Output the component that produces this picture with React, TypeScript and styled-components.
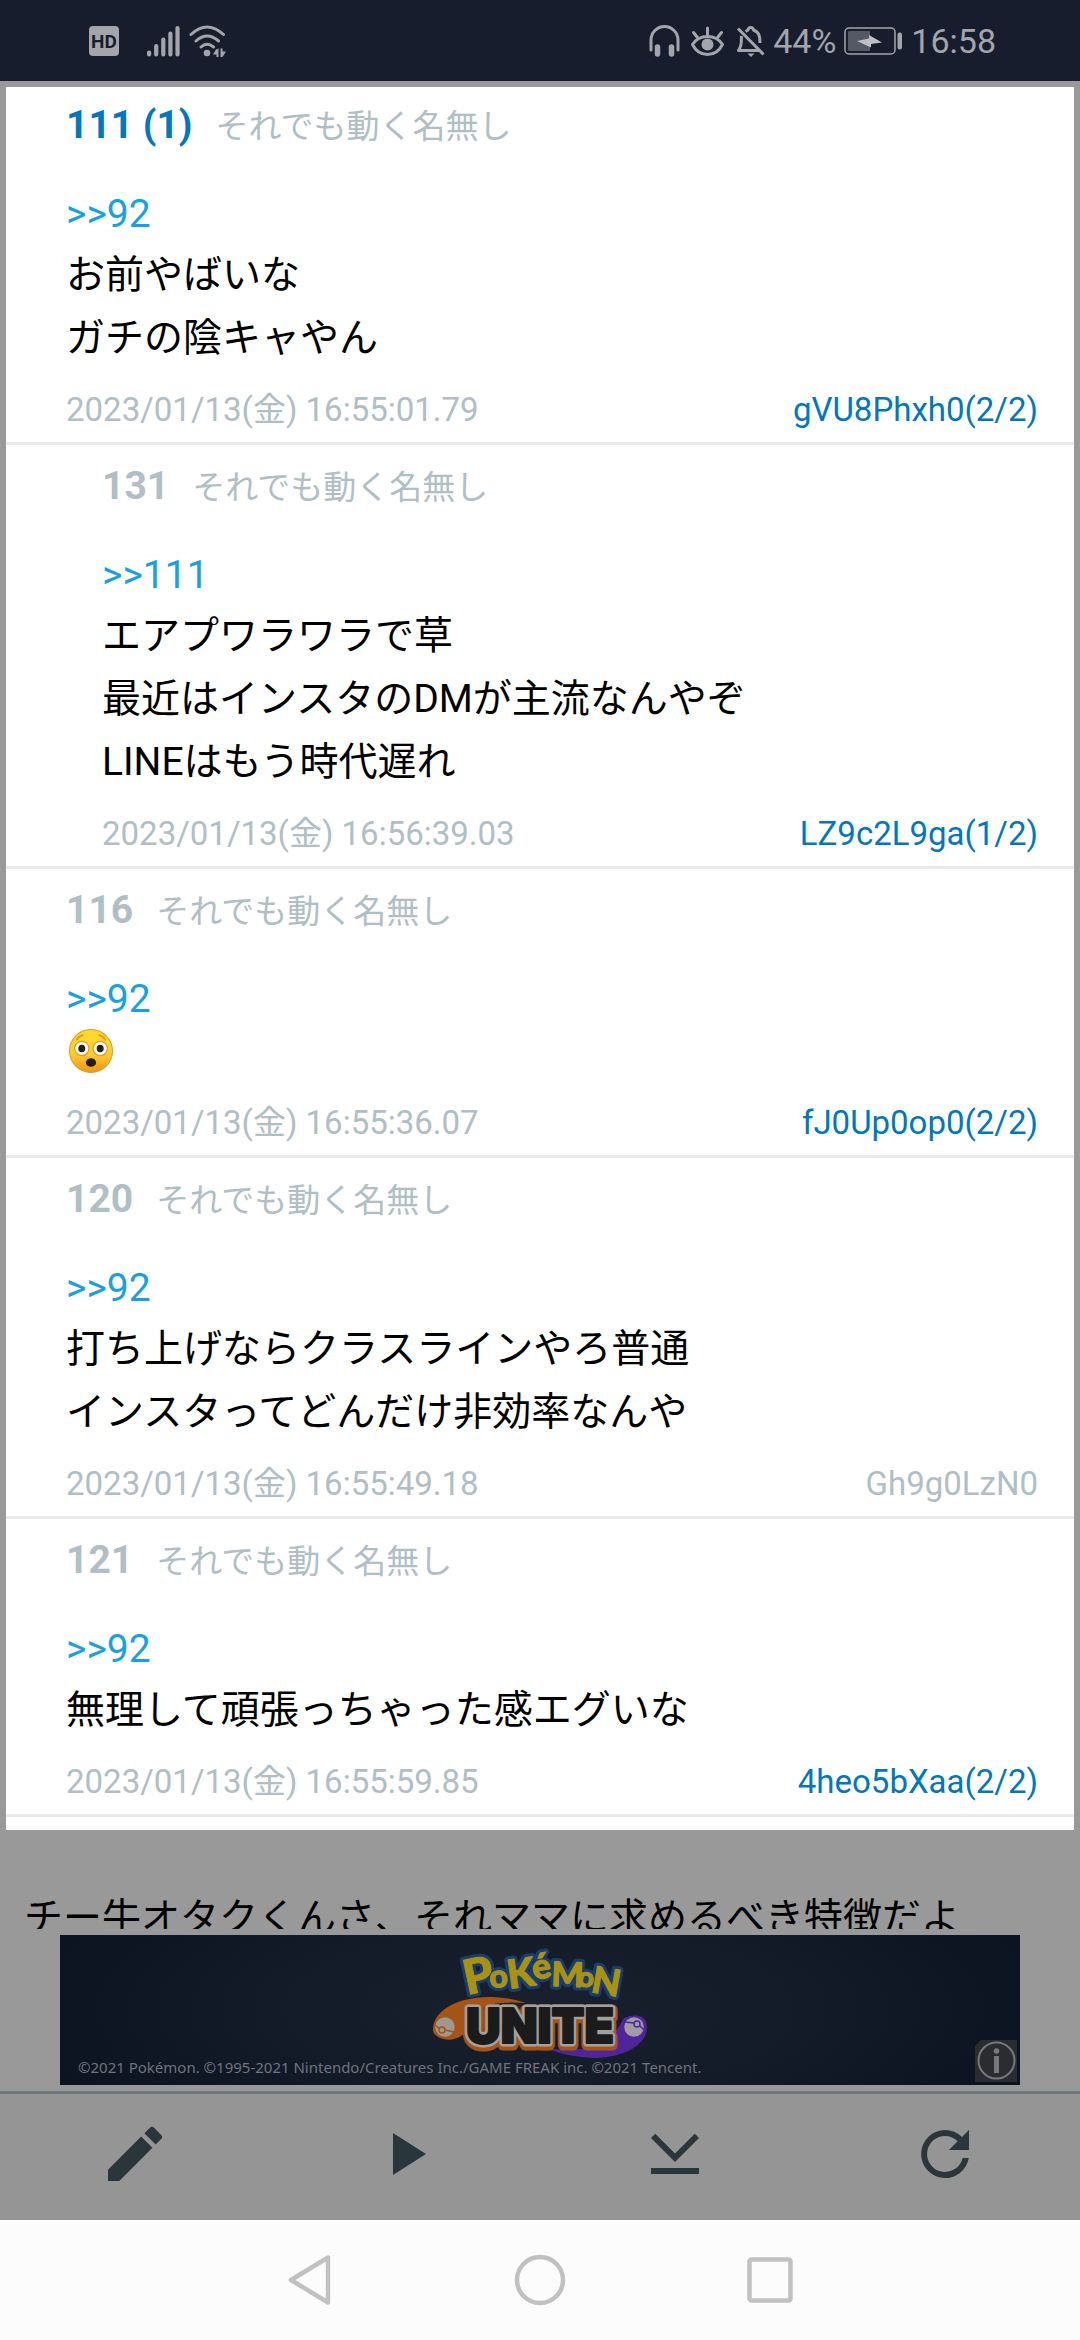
import React from "react";
import styled, { createGlobalStyle } from "styled-components";

const color = {
  status: "#171d2d",
  statusInk: "#a3a5ab",
  scrim: "#999999",
  card: "#ffffff",
  divider: "#eaebeb",
  muted: "#b0bec5",
  link: "#0277bd",
  anchor: "#18a0e3",
  text: "#000000",
  toolbar: "#959595",
  toolbarLine: "#6f7a7c",
  toolbarInk: "#29363c",
  nav: "#fcfcfc",
  navInk: "#c1c1c1",
};

const GlobalStyle = createGlobalStyle`
  *, *::before, *::after { box-sizing: border-box; }
  body {
    margin: 0;
    background: ${color.scrim};
    font-family: Roboto, "Noto Sans CJK JP", sans-serif;
    font-size: 39px;
    line-height: 63px;
    color: ${color.text};
  }
  p, h2, ul, ol { margin: 0; padding: 0; }
  svg { display: block; flex: none; }
`;

const Screen = styled.div`
  display: flex;
  flex-direction: column;
  min-height: 100vh;
`;

const StatusBar = styled.header`
  display: flex;
  justify-content: space-between;
  align-items: center;
  height: 81px;
  padding: 0 84px 0 89px;
  background: ${color.status};
  color: ${color.statusInk};
  font-size: 34px;
  line-height: 40px;
`;

const StatusGroup = styled.div`
  display: flex;
  align-items: center;
  gap: 8px;
`;

const SignalGroup = styled(StatusGroup)`
  margin-left: 20px;
`;

const Popup = styled.ol`
  margin: 6px 6px 0;
  padding-bottom: 13px;
  background: ${color.card};
  list-style: none;
`;

const PostItem = styled.li<{ $nested: boolean }>`
  padding: 18px 36px 13px ${(p) => (p.$nested ? 96 : 60)}px;
  border-bottom: 3px solid ${color.divider};

  &:first-child {
    padding-top: 15px;
  }
`;

const PostHeader = styled.div`
  display: flex;
  align-items: baseline;
  gap: 23px;
  height: 48px;
  margin-bottom: 34px;
  line-height: 46px;
  color: ${color.muted};
`;

const PostNumber = styled.h2<{ $replied: boolean }>`
  font-size: 39px;
  font-weight: 700;
  line-height: 46px;
  color: ${(p) => (p.$replied ? color.link : color.muted)};
`;

const PosterName = styled.span`
  font-size: 33px;
`;

const Anchor = styled.a`
  display: block;
  line-height: 60px;
  color: ${color.anchor};
  text-decoration: none;
`;

const EmojiLine = styled.div`
  display: flex;
  align-items: center;
  height: 54px;
  padding: 0 0 10px 3px;
`;

const PostFooter = styled.div`
  display: flex;
  justify-content: space-between;
  margin-top: 20px;
  font-size: 33px;
  line-height: 39px;
  color: ${color.muted};
`;

const PosterId = styled.a<{ $active: boolean }>`
  color: ${(p) => (p.$active ? color.link : color.muted)};
  text-decoration: none;
`;

const ThreadBehind = styled.main`
  flex: 1 0 99px;
  height: 99px;
  overflow: hidden;
  padding: 57px 24px 0;
  white-space: nowrap;
`;

const Banner = styled.aside`
  position: relative;
  display: flex;
  flex-direction: column;
  align-items: center;
  height: 150px;
  margin: 6px 60px;
  background: radial-gradient(ellipse 60% 130% at 50% 50%, #1a212e 0%, #131a28 45%, #0a1220 100%);
`;

const BannerCaption = styled.p`
  align-self: stretch;
  padding-left: 18px;
  font-family: "Noto Sans", sans-serif;
  font-size: 15px;
  line-height: 20px;
  color: #70747c;
  white-space: nowrap;
`;

const AdInfo = styled.button`
  position: absolute;
  right: 3px;
  bottom: 3px;
  padding: 0;
  border: 0;
  background: none;
`;

const Toolbar = styled.nav`
  display: grid;
  grid-template-columns: repeat(4, 1fr);
  height: 129px;
  padding-bottom: 6px;
  border-top: 3px solid ${color.toolbarLine};
  background: ${color.toolbar};
`;

const IconButton = styled.button`
  display: flex;
  align-items: center;
  justify-content: center;
  padding: 0;
  border: 0;
  background: none;
  color: inherit;
`;

const ToolButton = styled(IconButton)`
  color: ${color.toolbarInk};
`;

const SystemNav = styled.nav`
  display: flex;
  justify-content: center;
  height: 120px;
  background: ${color.nav};
  color: ${color.navInk};
`;

const NavButton = styled(IconButton)`
  width: 230px;
`;

type Post = {
  no: string;
  replied?: boolean;
  nested?: boolean;
  anchor: string;
  lines: string[];
  emoji?: boolean;
  date: string;
  id: string;
  active: boolean;
};

const posts: Post[] = [
  {
    no: "111 (1)",
    replied: true,
    anchor: ">>92",
    lines: ["お前やばいな", "ガチの陰キャやん"],
    date: "2023/01/13(金) 16:55:01.79",
    id: "gVU8Phxh0(2/2)",
    active: true,
  },
  {
    no: "131",
    nested: true,
    anchor: ">>111",
    lines: ["エアプワラワラで草", "最近はインスタのDMが主流なんやぞ", "LINEはもう時代遅れ"],
    date: "2023/01/13(金) 16:56:39.03",
    id: "LZ9c2L9ga(1/2)",
    active: true,
  },
  {
    no: "116",
    anchor: ">>92",
    lines: [],
    emoji: true,
    date: "2023/01/13(金) 16:55:36.07",
    id: "fJ0Up0op0(2/2)",
    active: true,
  },
  {
    no: "120",
    anchor: ">>92",
    lines: ["打ち上げならクラスラインやろ普通", "インスタってどんだけ非効率なんや"],
    date: "2023/01/13(金) 16:55:49.18",
    id: "Gh9g0LzN0",
    active: false,
  },
  {
    no: "121",
    anchor: ">>92",
    lines: ["無理して頑張っちゃった感エグいな"],
    date: "2023/01/13(金) 16:55:59.85",
    id: "4heo5bXaa(2/2)",
    active: true,
  },
];

function FlushedFace() {
  return (
    <svg width="44" height="44" viewBox="0 0 43 43" role="img" aria-label="😳">
      <defs>
        <linearGradient id="face" x1="0" y1="0" x2="0" y2="1">
          <stop offset="0" stopColor="#fddb2e" />
          <stop offset="0.55" stopColor="#fdd030" />
          <stop offset="1" stopColor="#f39219" />
        </linearGradient>
      </defs>
      <circle cx="21.5" cy="21.5" r="21" fill="url(#face)" stroke="#e59a1e" />
      <path d="M7.5 10.5Q9.5 7 13.5 6M35.5 10.5Q33.5 7 29.5 6" fill="none" stroke="#e39a1a" strokeWidth="1.6" strokeLinecap="round" />
      <circle cx="12.5" cy="19" r="7" fill="#fff" stroke="#e59a1e" strokeWidth="1.2" />
      <circle cx="30.5" cy="19" r="7" fill="#fff" stroke="#e59a1e" strokeWidth="1.2" />
      <ellipse cx="12.5" cy="19" rx="3.4" ry="3.7" fill="#222" />
      <ellipse cx="30.5" cy="19" rx="3.4" ry="3.7" fill="#222" />
      <ellipse cx="21.5" cy="32.8" rx="5" ry="4.2" fill="#251d14" />
    </svg>
  );
}

function HdIcon() {
  return (
    <svg width="30" height="30" viewBox="0 0 30 30" role="img" aria-label="HD">
      <rect width="30" height="30" rx="4" fill={color.statusInk} />
      <text x="15" y="22" textAnchor="middle" fontFamily="Roboto" fontSize="19" fontWeight="700" fill={color.status}>
        HD
      </text>
    </svg>
  );
}

function SignalIcon() {
  return (
    <svg width="34" height="32" viewBox="0 0 34 32" stroke="currentColor" strokeWidth="4.2" strokeLinecap="round" aria-hidden>
      <path d="M2.1 27.5V29.5M9.2 21V29.5M16.3 14.5V29.5M23.4 8.5V29.5M30.5 3V29.5" />
    </svg>
  );
}

function WifiIcon() {
  return (
    <svg width="37" height="32" viewBox="0 0 37 32" fill="none" stroke="currentColor" strokeWidth="3" strokeLinecap="round" aria-hidden>
      <path d="M2 9.5Q18 -5.5 34.5 9.5M7 16Q18 6 29.5 16M12 22Q18 16.5 24.5 22" />
      <circle cx="18" cy="28" r="3.3" fill="currentColor" stroke="none" />
      <path d="M29.5 23.5V32H27.5V29.5H24L27 24.5ZM31.5 23.5V32H33.5L37 26.5H33.5V23.5Z" fill="currentColor" stroke="none" />
    </svg>
  );
}

function HeadphonesIcon() {
  return (
    <svg width="34" height="32" viewBox="0 0 34 32" fill="none" stroke="currentColor" strokeLinecap="round" aria-hidden>
      <path d="M2 25V15A13.5 13.5 0 0 1 29 15V25" strokeWidth="3" />
      <path d="M8.5 22V29M22.5 22V29" strokeWidth="5.5" />
    </svg>
  );
}

function EyeIcon() {
  return (
    <svg width="36" height="32" viewBox="0 0 36 32" fill="none" stroke="currentColor" strokeWidth="3" strokeLinecap="round" aria-hidden>
      <path d="M1.5 19.5C5 14 10 11.5 16.5 11.5S28 14 31.5 19.5C28 26.5 23 29.5 16.5 29.5S5 26.5 1.5 19.5Z" strokeLinejoin="round" />
      <circle cx="16.5" cy="19.5" r="6" fill="currentColor" stroke="none" />
      <path d="M16.5 3V11M2.5 7.5L6.5 12.5M30.5 7.5L26.5 12.5" />
    </svg>
  );
}

function BellOffIcon() {
  return (
    <svg width="30" height="32" viewBox="0 0 30 32" fill="none" stroke="currentColor" strokeWidth="3" strokeLinejoin="round" aria-hidden>
      <path d="M3 3.5L28.5 29.5" />
      <path d="M6.5 11C6 16 7.5 20 3.5 25.5H24M10.5 6.5L13 5C13.5 1.5 18 1.5 18.5 5C24 7 25 11 25 18" />
      <path d="M12.5 28.5H19.5L16 32Z" fill="currentColor" stroke="none" />
    </svg>
  );
}

function BatteryIcon() {
  return (
    <svg width="59" height="28" viewBox="0 0 59 28" aria-hidden>
      <rect x="1" y="1" width="50" height="26" rx="4" fill="none" stroke="currentColor" strokeWidth="1.5" />
      <rect x="4" y="4" width="22" height="20" rx="1" fill="#555966" />
      <path d="M13 14L25 11.5V8L38 15.5L27 17V20.5Z" fill="#bfc0c5" />
      <rect x="53.5" y="5.5" width="4.5" height="17" rx="2" fill="currentColor" />
    </svg>
  );
}

const pokemonLetters = [
  { t: "P", x: 67, y: 65, size: 48, r: -12 },
  { t: "o", x: 90, y: 58, size: 32, r: -4 },
  { t: "K", x: 109, y: 59, size: 40, r: -8 },
  { t: "é", x: 134, y: 50, size: 35, r: -10 },
  { t: "M", x: 151, y: 56, size: 34, r: 2 },
  { t: "o", x: 177, y: 56, size: 28, r: 6 },
  { t: "N", x: 190, y: 62, size: 37, r: 10 },
];

function GameLogo() {
  return (
    <svg width="280" height="122" viewBox="0 5 280 122" overflow="visible" role="img" aria-label="Pokémon UNITE">
      <path d="M33 99C34 78 62 66 93 67Q112 68 126 73Q98 71 84 77L64 104Q52 113 40 108Q32 104 33 99Z" fill="#a65316" />
      <path d="M148 119Q178 120 206 118L224 88Q246 80 247 98C246 118 218 128 194 128Q168 127 148 119Z" fill="#50259a" />
      <g fontFamily="Lato, sans-serif" fontWeight="900" strokeLinejoin="round">
        {pokemonLetters.map((l, i) => (
          <text key={`back${i}`} x={l.x} y={l.y} fontSize={l.size} transform={`rotate(${l.r} ${l.x} ${l.y})`} fill="#183d70" stroke="#183d70" strokeWidth="7">
            {l.t}
          </text>
        ))}
        {pokemonLetters.map((l, i) => (
          <text key={`front${i}`} x={l.x} y={l.y} fontSize={l.size} transform={`rotate(${l.r} ${l.x} ${l.y})`} fill="#a99213" stroke="#a99213" strokeWidth="1">
            {l.t}
          </text>
        ))}
      </g>
      <g fontFamily="Inter, sans-serif" fontWeight="900" fontSize="48" textAnchor="middle" strokeLinejoin="round">
        <text x="140" y="115" fill="#a65316" stroke="#a65316" strokeWidth="11">UNITE</text>
        <text x="140" y="113" fill="#a3a09c" stroke="#a3a09c" strokeWidth="7">UNITE</text>
        <text x="140" y="113" fill="#1b1b1b" stroke="#1b1b1b" strokeWidth="2">UNITE</text>
      </g>
      <circle cx="45" cy="97" r="10.5" fill="#a09790" stroke="#a65316" strokeWidth="1.5" />
      <path d="M35 95L40 99M45 100L54 102" stroke="#a65316" strokeWidth="1.5" />
      <circle cx="42" cy="100" r="3" fill="#a09790" stroke="#a65316" strokeWidth="1.5" />
      <circle cx="234" cy="97" r="10.5" fill="#a19ba8" stroke="#50259a" strokeWidth="1.5" />
      <path d="M225 92L234 93M240 96L244 100" stroke="#50259a" strokeWidth="1.5" />
      <circle cx="237" cy="94" r="3" fill="#a19ba8" stroke="#50259a" strokeWidth="1.5" />
    </svg>
  );
}

function InfoIcon() {
  return (
    <svg width="42" height="42" viewBox="0 0 42 42" aria-hidden>
      <path d="M6 0H42V42H0V6Z" fill="#2b2c30" />
      <circle cx="21.5" cy="20.5" r="18" fill="none" stroke="#77787b" strokeWidth="2" />
      <circle cx="21.5" cy="11" r="2.8" fill="#77787b" />
      <rect x="19" y="16" width="5" height="17" fill="#77787b" />
    </svg>
  );
}

const toolIcons = [
  {
    label: "書き込み",
    path: "M3 17.25V21h3.75L17.81 9.94l-3.75-3.75L3 17.25zM20.71 7.04a1 1 0 0 0 0-1.41l-2.34-2.34a1 1 0 0 0-1.41 0l-1.83 1.83 3.75 3.75 1.83-1.83z",
  },
  { label: "自動スクロール", path: "M8 5v14l11-7z" },
  {
    label: "最下部へ",
    path: "M5.41 5.25L12 11.84l6.59-6.59L20 6.66l-8 8-8-8zM4 16.67h16v2H4z",
  },
  {
    label: "更新",
    path: "M17.65 6.35A7.96 7.96 0 0 0 12 4a8 8 0 1 0 7.93 9.33h-2.06A6 6 0 1 1 12 6c1.66 0 3.14.69 4.22 1.78L13.33 10.67H20V4l-2.35 2.35z",
  },
];

function PostView({ post }: { post: Post }) {
  return (
    <PostItem $nested={!!post.nested}>
      <PostHeader>
        <PostNumber $replied={!!post.replied}>{post.no}</PostNumber>
        <PosterName>それでも動く名無し</PosterName>
      </PostHeader>
      <Anchor href="#">{post.anchor}</Anchor>
      {post.lines.map((line) => (
        <p key={line}>{line}</p>
      ))}
      {post.emoji && (
        <EmojiLine>
          <FlushedFace />
        </EmojiLine>
      )}
      <PostFooter>
        <time>{post.date}</time>
        <PosterId href="#" $active={post.active}>
          {post.id}
        </PosterId>
      </PostFooter>
    </PostItem>
  );
}

export default function App() {
  return (
    <>
      <GlobalStyle />
      <Screen>
        <StatusBar>
          <StatusGroup>
            <HdIcon />
            <SignalGroup>
              <SignalIcon />
              <WifiIcon />
            </SignalGroup>
          </StatusGroup>
          <StatusGroup>
            <HeadphonesIcon />
            <EyeIcon />
            <BellOffIcon />
            <span>44%</span>
            <BatteryIcon />
            <span>16:58</span>
          </StatusGroup>
        </StatusBar>
        <Popup>
          {posts.map((post) => (
            <PostView key={post.no} post={post} />
          ))}
        </Popup>
        <ThreadBehind>
          <p>チー牛オタクくんさ、それママに求めるべき特徴だよ</p>
        </ThreadBehind>
        <Banner>
          <GameLogo />
          <BannerCaption>©2021 Pokémon. ©1995-2021 Nintendo/Creatures Inc./GAME FREAK inc. ©2021 Tencent.</BannerCaption>
          <AdInfo aria-label="広告情報">
            <InfoIcon />
          </AdInfo>
        </Banner>
        <Toolbar>
          {toolIcons.map((icon) => (
            <ToolButton key={icon.label} aria-label={icon.label}>
              <svg width="72" height="72" viewBox="0 0 24 24" fill="currentColor">
                <path d={icon.path} />
              </svg>
            </ToolButton>
          ))}
        </Toolbar>
        <SystemNav>
          <NavButton aria-label="戻る">
            <svg width="46" height="52" viewBox="0 0 46 52" fill="none" stroke="currentColor" strokeWidth="4.5" strokeLinejoin="round">
              <path d="M41 3.5V48.5L4 26Z" />
            </svg>
          </NavButton>
          <NavButton aria-label="ホーム">
            <svg width="52" height="52" viewBox="0 0 52 52" fill="none" stroke="currentColor" strokeWidth="4.5">
              <circle cx="26" cy="26" r="23" />
            </svg>
          </NavButton>
          <NavButton aria-label="履歴">
            <svg width="46" height="46" viewBox="0 0 46 46" fill="none" stroke="currentColor" strokeWidth="4.5">
              <rect x="2.5" y="2.5" width="41" height="41" rx="2" />
            </svg>
          </NavButton>
        </SystemNav>
      </Screen>
    </>
  );
}
